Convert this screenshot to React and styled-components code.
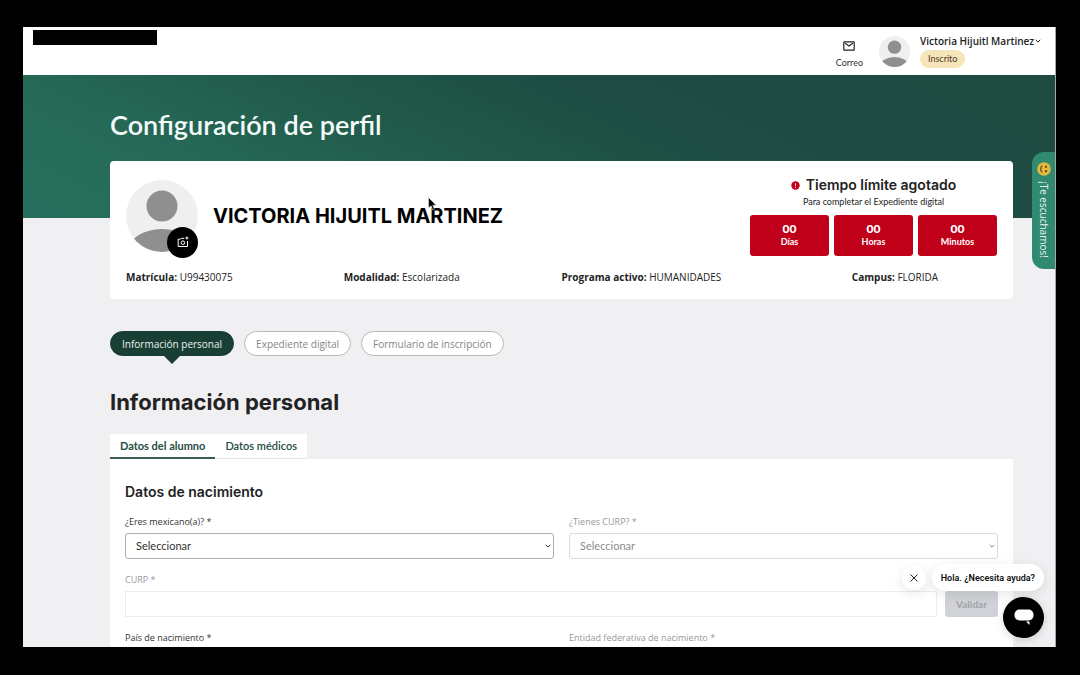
import React, { useState } from "react";
import styled, { createGlobalStyle } from "styled-components";

const facts = [
    { label: "Matrícula:", value: "U99430075" },
    { label: "Modalidad:", value: "Escolarizada" },
    { label: "Programa activo:", value: "HUMANIDADES" },
    { label: "Campus:", value: "FLORIDA" },
];

const counters = ["Días", "Horas", "Minutos"];

const sections = ["Información personal", "Expediente digital", "Formulario de inscripción"];

const tabs = ["Datos del alumno", "Datos médicos"];

function Avatar({ size }) {
    return (
        <AvatarSvg $size={size} viewBox="0 0 72 72" aria-hidden="true">
            <clipPath id={`avatar-${size}`}>
                <circle cx="36" cy="36" r="36" />
            </clipPath>
            <g clipPath={`url(#avatar-${size})`}>
                <rect width="72" height="72" fill="#efefef" />
                <circle cx="36" cy="26" r="15.5" fill="#8f8f8f" />
                <ellipse cx="36" cy="71" rx="34" ry="22" fill="#8f8f8f" />
            </g>
        </AvatarSvg>
    );
}

function Chevron() {
    return (
        <svg width="6" height="6" viewBox="0 0 6 6" fill="none" stroke="currentColor" strokeWidth="1" aria-hidden="true">
            <path d="M0.7 1.8L3 4.1L5.3 1.8" />
        </svg>
    );
}

function SelectField({ id, label, disabled }) {
    return (
        <Field>
            <Label htmlFor={id} $muted={disabled}>{label}</Label>
            <SelectWrap $muted={disabled}>
                <Select id={id} disabled={disabled}>
                    <option>Seleccionar</option>
                </Select>
                <Chevron />
            </SelectWrap>
        </Field>
    );
}

function App() {
    const [section, setSection] = useState(0);
    const [tab, setTab] = useState(0);
    const [helpOpen, setHelpOpen] = useState(true);

    return (
        <Frame>
            <GlobalStyle />
            <Screen>
                <Header>
                    <Brand />
                    <Mail href="#correo">
                        <svg width="12" height="10" viewBox="0 0 12 10" fill="none" stroke="#222" strokeWidth="1.2" aria-hidden="true">
                            <rect x="0.8" y="0.8" width="10.4" height="8.4" rx="0.4" />
                            <path d="M2.2 2.2L6 5L9.8 2.2" />
                        </svg>
                        Correo
                    </Mail>
                    <Avatar size={31} />
                    <Account>
                        <UserButton>
                            Victoria Hijuitl Martinez
                            <Chevron />
                        </UserButton>
                        <Status>Inscrito</Status>
                    </Account>
                </Header>

                <Main>
                    <PageTitle>Configuración de perfil</PageTitle>

                    <Card>
                        <Profile>
                            <Photo>
                                <Avatar size={72} />
                                <CameraButton aria-label="Cambiar foto">
                                    <svg width="12" height="12" viewBox="0 0 12 12" fill="none" stroke="#fff" strokeWidth="1">
                                        <path d="M7.3 2.3H4.3L3.5 3.2H1.2V10.5H10.5V5" />
                                        <circle cx="5.9" cy="6.7" r="1.8" />
                                        <path d="M9.9 0.5V3.5M8.4 2H11.4" />
                                    </svg>
                                </CameraButton>
                            </Photo>
                            <Name>VICTORIA HIJUITL MARTINEZ</Name>
                            <Deadline>
                                <DeadlineTitle>
                                    <svg width="9" height="9" viewBox="0 0 9 9" aria-hidden="true">
                                        <circle cx="4.5" cy="4.5" r="4.2" fill="#c10019" />
                                        <path d="M4.5 2.2V5M4.5 5.9V6.9" stroke="#fff" strokeWidth="0.8" />
                                    </svg>
                                    Tiempo límite agotado
                                </DeadlineTitle>
                                <DeadlineText>Para completar el Expediente digital</DeadlineText>
                                <Counters>
                                    {counters.map((unit) => (
                                        <Counter key={unit}>
                                            <strong>00</strong>
                                            <span>{unit}</span>
                                        </Counter>
                                    ))}
                                </Counters>
                            </Deadline>
                        </Profile>
                        <Facts>
                            {facts.map((fact) => (
                                <li key={fact.label}>
                                    <b>{fact.label}</b> {fact.value}
                                </li>
                            ))}
                        </Facts>
                    </Card>

                    <Pills>
                        {sections.map((name, i) => (
                            <Pill key={name} $active={section === i} onClick={() => setSection(i)}>{name}</Pill>
                        ))}
                    </Pills>

                    <SectionTitle>Información personal</SectionTitle>

                    <Tabs role="tablist">
                        {tabs.map((name, i) => (
                            <Tab key={name} role="tab" aria-selected={tab === i} $active={tab === i} onClick={() => setTab(i)}>
                                {name}
                            </Tab>
                        ))}
                    </Tabs>

                    <Panel>
                        <PanelTitle>Datos de nacimiento</PanelTitle>
                        <Fields>
                            <SelectField id="mexicano" label="¿Eres mexicano(a)? *" />
                            <SelectField id="tiene-curp" label="¿Tienes CURP? *" disabled />
                            <WideField>
                                <Label htmlFor="curp" $muted>CURP *</Label>
                                <CurpRow>
                                    <Input id="curp" type="text" disabled />
                                    <Validate disabled>Validar</Validate>
                                </CurpRow>
                            </WideField>
                            <SelectField id="pais" label="País de nacimiento *" />
                            <SelectField id="entidad" label="Entidad federativa de nacimiento *" disabled />
                        </Fields>
                    </Panel>
                </Main>

                <Feedback>
                    <svg width="14" height="14" viewBox="0 0 14 14" aria-hidden="true">
                        <circle cx="7" cy="7" r="6.8" fill="#e3b83f" />
                        <circle cx="9" cy="4.8" r="1.1" fill="#5c4210" />
                        <circle cx="9" cy="9.2" r="1.1" fill="#5c4210" />
                        <path d="M5.2 3.6C3.2 5.4 3.2 8.6 5.2 10.4" fill="none" stroke="#5c4210" strokeWidth="1.2" />
                    </svg>
                    ¡Te escuchamos!
                </Feedback>

                <Help>
                    {helpOpen && (
                        <HelpMessage>
                            <HelpClose aria-label="Cerrar" onClick={() => setHelpOpen(false)}>
                                <svg width="8" height="8" viewBox="0 0 8 8" stroke="#222" strokeWidth="1">
                                    <path d="M0.5 0.5L7.5 7.5M7.5 0.5L0.5 7.5" />
                                </svg>
                            </HelpClose>
                            <HelpText>Hola. ¿Necesita ayuda?</HelpText>
                        </HelpMessage>
                    )}
                    <ChatButton aria-label="Abrir chat" onClick={() => setHelpOpen(true)}>
                        <svg width="20" height="17" viewBox="0 0 20 17" fill="#fff">
                            <rect x="0.5" y="0.5" width="19" height="11" rx="5" />
                            <path d="M12 12.4H15.5V16Z" />
                        </svg>
                    </ChatButton>
                </Help>

                <Cursor width="9" height="14" viewBox="0 0 9 14" aria-hidden="true">
                    <path d="M0.5 0.5V11L3 8.8L4.8 13L6.5 12.2L4.8 8.2H8.2Z" fill="#000" stroke="#fff" strokeWidth="0.5" />
                </Cursor>
            </Screen>
        </Frame>
    );
}

export default App;

const GlobalStyle = createGlobalStyle`
    * {
        box-sizing: border-box;
    }

    body {
        margin: 0;
        background: #000;
        color: #222;
        font-family: Lato, "Liberation Sans", sans-serif;
        font-size: 11px;
        line-height: 14px;
    }

    button, input, select {
        margin: 0;
        padding: 0;
        border: 0;
        color: inherit;
        font: inherit;
    }

    button {
        cursor: pointer;
    }

    svg {
        flex: none;
        display: block;
    }
`;

const Frame = styled.div`
    height: 100vh;
    padding: 27px 24px 28px 23px;
`;

const Screen = styled.div`
    position: relative;
    height: 100%;
    overflow: hidden;
    border-right: 1px solid #a5a8a8;
    background: #f0f0f3;
`;

const Header = styled.header`
    display: flex;
    align-items: center;
    height: 48px;
    padding: 3px 13px 3px 10px;
    background: #fff;
`;

const Brand = styled.div`
    align-self: flex-start;
    width: 124px;
    height: 15px;
    margin-right: auto;
    background: #000;
`;

const Mail = styled.a`
    display: flex;
    flex-direction: column;
    align-items: center;
    gap: 6px;
    margin: 8px 16px 0 0;
    color: #333;
    font-size: 9px;
    line-height: 12px;
    text-decoration: none;
`;

const AvatarSvg = styled.svg`
    width: ${(props) => props.$size}px;
    height: ${(props) => props.$size}px;
`;

const Account = styled.div`
    display: flex;
    flex-direction: column;
    align-items: flex-start;
    gap: 2px;
    min-width: 122px;
    margin-left: 10px;
`;

const UserButton = styled.button`
    display: flex;
    align-items: center;
    gap: 1px;
    background: none;
    font-family: "Open Sans", "Liberation Sans", sans-serif;
    font-size: 10px;
    font-weight: 600;
`;

const Status = styled.span`
    padding: 2px 8px;
    border-radius: 9px;
    background: #f5e5b8;
    color: #4b3a28;
    font-size: 9px;
`;

const Main = styled.main`
    padding: 33px 42px 0 87px;
    background: linear-gradient(24deg, #27705d 0%, #266957 22%, #215a4b 42%, #1e4d43 62%, #1e4a40 100%) top / 100% 143px no-repeat;
`;

const PageTitle = styled.h1`
    margin: 0 0 19px;
    color: #f4fbf8;
    font-size: 27px;
    font-weight: 600;
    line-height: 34px;
`;

const Card = styled.section`
    padding: 14px 16px;
    border-radius: 4px;
    background: #fff;
`;

const Profile = styled.div`
    display: flex;
    align-items: center;
`;

const Photo = styled.div`
    position: relative;
    margin-right: 15px;
`;

const CameraButton = styled.button`
    position: absolute;
    right: 0;
    bottom: -6px;
    display: grid;
    place-items: center;
    width: 31px;
    height: 31px;
    border-radius: 50%;
    background: #000;
`;

const Name = styled.h2`
    flex: 1;
    margin: 0;
    color: #000;
    font-family: Inter, "Liberation Sans", sans-serif;
    font-size: 20px;
    font-weight: 700;
    line-height: 26px;
`;

const Deadline = styled.div`
    width: 247px;
    text-align: center;
`;

const DeadlineTitle = styled.h3`
    display: flex;
    align-items: center;
    justify-content: center;
    gap: 6px;
    margin: 0;
    font-family: Inter, "Liberation Sans", sans-serif;
    font-size: 14px;
    font-weight: 600;
    line-height: 20px;
`;

const DeadlineText = styled.p`
    margin: 0 0 6px;
    font-size: 9px;
`;

const Counters = styled.div`
    display: grid;
    grid-template-columns: repeat(3, 1fr);
    gap: 5px;
`;

const Counter = styled.div`
    display: flex;
    flex-direction: column;
    padding: 7px 0 8px;
    border-radius: 3px;
    background: #c00019;
    color: #fff;
    font-size: 9px;
    font-weight: 700;
    line-height: 12px;

    strong {
        font-size: 12px;
        line-height: 14px;
    }
`;

const Facts = styled.ul`
    display: grid;
    grid-template-columns: 3fr 3fr 4fr 2fr;
    margin: 14px 0 1px;
    padding: 0;
    list-style: none;
    font-family: "Open Sans", "Liberation Sans", sans-serif;
    font-size: 10px;
`;

const Pills = styled.nav`
    display: flex;
    gap: 10px;
    margin-top: 32px;
`;

const Pill = styled.button`
    position: relative;
    height: 25px;
    padding: 0 11px;
    border: 1px solid ${(props) => (props.$active ? "#193f35" : "#b9b9bd")};
    border-radius: 13px;
    background: ${(props) => (props.$active ? "#193f35" : "#fff")};
    color: ${(props) => (props.$active ? "#e9f2ef" : "#858585")};
    font-family: "Open Sans", "Liberation Sans", sans-serif;
    font-size: 10px;

    &::after {
        content: "";
        display: ${(props) => (props.$active ? "block" : "none")};
        position: absolute;
        top: 100%;
        left: calc(50% - 9px);
        border: 9px solid transparent;
        border-top-color: #193f35;
        border-bottom: 0;
    }
`;

const SectionTitle = styled.h2`
    margin: 32px 0 17px;
    font-family: Inter, "Liberation Sans", sans-serif;
    font-size: 22px;
    font-weight: 700;
    line-height: 29px;
`;

const Tabs = styled.div`
    display: flex;
`;

const Tab = styled.button`
    height: 25px;
    padding: 0 10px;
    border-bottom: ${(props) => (props.$active ? "2px solid #3b5d54" : "1px solid #e4e4e6")};
    background: #fff;
    color: #264d42;
    font-size: 11px;
    font-weight: ${(props) => (props.$active ? 700 : 600)};
`;

const Panel = styled.section`
    padding: 24px 15px;
    background: #fff;
`;

const PanelTitle = styled.h3`
    margin: 0 0 14px;
    font-family: Inter, "Liberation Sans", sans-serif;
    font-size: 14px;
    font-weight: 600;
    line-height: 18px;
`;

const Fields = styled.div`
    display: grid;
    grid-template-columns: 1fr 1fr;
    gap: 14px 15px;
`;

const Field = styled.div`
    display: flex;
    flex-direction: column;
    gap: 4px;
`;

const WideField = styled(Field)`
    grid-column: span 2;
`;

const Label = styled.label`
    color: ${(props) => (props.$muted ? "#999" : "#333")};
    font-family: "Open Sans", "Liberation Sans", sans-serif;
    font-size: 9px;
    line-height: 14px;
`;

const SelectWrap = styled.div`
    display: flex;
    align-items: center;
    height: 26px;
    padding-right: 2px;
    border: 1px solid ${(props) => (props.$muted ? "#dcdcdc" : "#b0b0b0")};
    border-radius: 3px;
    color: ${(props) => (props.$muted ? "#8c8c8c" : "#333")};
`;

const Select = styled.select`
    flex: 1;
    align-self: stretch;
    padding-left: 10px;
    appearance: none;
    background: none;
    opacity: 1;
`;

const CurpRow = styled.div`
    display: flex;
    gap: 8px;
`;

const Input = styled.input`
    flex: 1;
    height: 26px;
    padding: 0 10px;
    border: 1px solid #ededed;
    background: #fff;
`;

const Validate = styled.button`
    width: 53px;
    height: 26px;
    border-radius: 3px;
    background: #d0d2d7;
    color: #a0a2a8;
    font-size: 10px;
    font-weight: 700;
`;

const Feedback = styled.button`
    position: absolute;
    top: 125px;
    right: 0;
    display: flex;
    align-items: center;
    gap: 5px;
    width: 23px;
    height: 117px;
    padding: 10px 0;
    border-radius: 12px 0 0 12px;
    background: #2f8a70;
    color: #e6f5ef;
    font-family: "Open Sans", "Liberation Sans", sans-serif;
    font-size: 10px;
    writing-mode: vertical-rl;
`;

const Help = styled.aside`
    position: absolute;
    right: 11px;
    bottom: 9px;
    display: flex;
    flex-direction: column;
    align-items: flex-end;
    gap: 6px;
`;

const HelpMessage = styled.div`
    display: flex;
    align-items: center;
    gap: 6px;
    color: #111;
`;

const HelpClose = styled.button`
    display: grid;
    place-items: center;
    width: 24px;
    height: 24px;
    border-radius: 50%;
    background: #fff;
    box-shadow: 0 3px 12px rgba(0, 0, 0, 0.1);
`;

const HelpText = styled.div`
    padding: 7px 9px 6px;
    border-radius: 14px;
    background: #fff;
    box-shadow: 0 3px 12px rgba(0, 0, 0, 0.1);
    font-family: Roboto, "Liberation Sans", sans-serif;
    font-size: 9px;
    font-weight: 600;
`;

const ChatButton = styled.button`
    display: grid;
    place-items: center;
    width: 41px;
    height: 41px;
    border-radius: 50%;
    background: #000;
    box-shadow: 0 2px 10px rgba(0, 0, 0, 0.15);
`;

const Cursor = styled.svg`
    position: absolute;
    top: 170px;
    left: 405px;
`;
